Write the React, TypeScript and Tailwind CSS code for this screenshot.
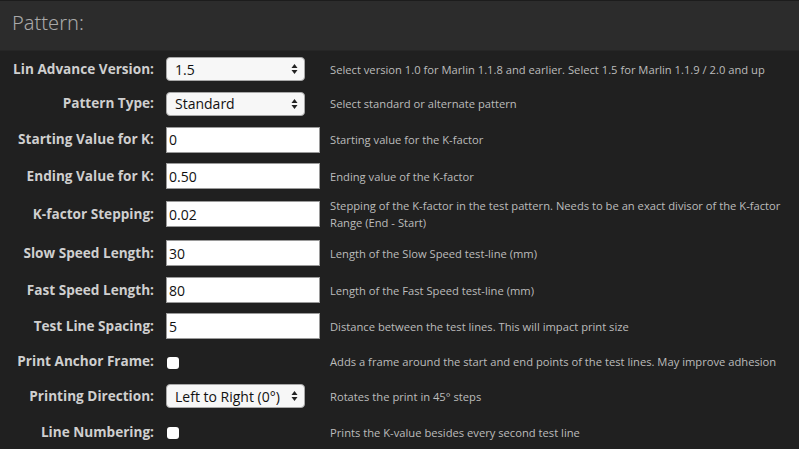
import React from "react";

const font = { fontFamily: '"Open Sans", "Noto Sans", sans-serif' };

function Arrows() {
  return (
    <svg width="7" height="12" viewBox="0 0 7 12" className="shrink-0">
      <path d="M3.5 1 L6.5 5 L0.5 5 Z" fill="#222" />
      <path d="M3.5 11 L6.5 7 L0.5 7 Z" fill="#222" />
    </svg>
  );
}

function Select({ value }: { value: string }) {
  return (
    <div className="flex h-[24px] w-[139px] items-center justify-between rounded-[4px] border border-[#a8a8a8] bg-[#f7f7f7] pl-[8px] pr-[6px] text-[14px] text-[#111]">
      <span>{value}</span>
      <Arrows />
    </div>
  );
}

function Input({ value }: { value: string }) {
  return (
    <div className="flex h-[26px] w-[154px] items-center border border-[#9a9a9a] bg-white pl-[2px] text-[14px] text-[#111]">
      {value}
    </div>
  );
}

function Check() {
  return <div className="mt-[2px] ml-[1px] h-[12px] w-[12px] rounded-[3px] bg-white" />;
}

type Row = { label: string; ctrl: React.ReactNode; desc: React.ReactNode; h: string };

const rows: Row[] = [
  { label: "Lin Advance Version:", ctrl: <Select value="1.5" />, desc: "Select version 1.0 for Marlin 1.1.8 and earlier. Select 1.5 for Marlin 1.1.9 / 2.0 and up", h: "h-[34px]" },
  { label: "Pattern Type:", ctrl: <Select value="Standard" />, desc: "Select standard or alternate pattern", h: "h-[35px]" },
  { label: "Starting Value for K:", ctrl: <Input value="0" />, desc: "Starting value for the K-factor", h: "h-[37px]" },
  { label: "Ending Value for K:", ctrl: <Input value="0.50" />, desc: "Ending value of the K-factor", h: "h-[36px]" },
  { label: "K-factor Stepping:", ctrl: <Input value="0.02" />, desc: <>Stepping of the K-factor in the test pattern. Needs to be an exact divisor of the K-factor<br />Range (End - Start)</>, h: "h-[40px]" },
  { label: "Slow Speed Length:", ctrl: <Input value="30" />, desc: "Length of the Slow Speed test-line (mm)", h: "h-[38px]" },
  { label: "Fast Speed Length:", ctrl: <Input value="80" />, desc: "Length of the Fast Speed test-line (mm)", h: "h-[36px]" },
  { label: "Test Line Spacing:", ctrl: <Input value="5" />, desc: "Distance between the test lines. This will impact print size", h: "h-[36px]" },
  { label: "Print Anchor Frame:", ctrl: <Check />, desc: "Adds a frame around the start and end points of the test lines. May improve adhesion", h: "h-[35px]" },
  { label: "Printing Direction:", ctrl: <Select value="Left to Right (0°)" />, desc: "Rotates the print in 45° steps", h: "h-[34px]" },
  { label: "Line Numbering:", ctrl: <Check />, desc: "Prints the K-value besides every second test line", h: "h-[38px]" },
];

export default function App() {
  return (
    <div className="h-[449px] w-[799px] overflow-hidden bg-[#202020]" style={font}>
      <div className="h-[1px] bg-[#1c1c1c]" />
      <div className="flex h-[50px] items-center border-b border-[#262626] bg-[#2c2c2c] pb-[5px] pl-[12px]">
        <span className="text-[20px] font-light text-[#a9a9a9]" style={{ fontFamily: '"Noto Sans", "Open Sans", sans-serif' }}>
          Pattern:
        </span>
      </div>
      <div className="pt-[1px]">
        {rows.map((r) => (
          <div key={r.label} className={`flex items-center ${r.h}`}>
            <div className="w-[154px] text-right text-[13.6px] font-bold text-[#cfcfcf]">{r.label}</div>
            <div className="ml-[12px] w-[164px] flex items-center">{r.ctrl}</div>
            <div className="text-[11.2px] leading-[17px] text-[#bcbcbc]">{r.desc}</div>
          </div>
        ))}
      </div>
    </div>
  );
}
